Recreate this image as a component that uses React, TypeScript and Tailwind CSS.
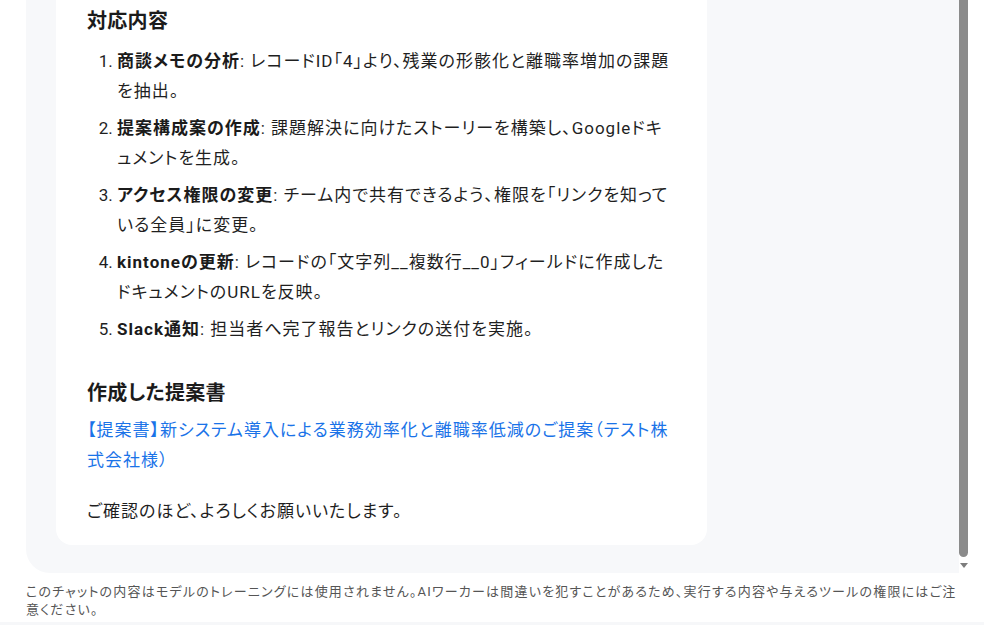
import React from "react";

type Step = { title: string; body: string };

const steps: Step[] = [
  {
    title: "商談メモの分析",
    body: "レコードID「4」より、残業の形骸化と離職率増加の課題を抽出。",
  },
  {
    title: "提案構成案の作成",
    body: "課題解決に向けたストーリーを構築し、Googleドキュメントを生成。",
  },
  {
    title: "アクセス権限の変更",
    body: "チーム内で共有できるよう、権限を「リンクを知っている全員」に変更。",
  },
  {
    title: "kintoneの更新",
    body: "レコードの「文字列__複数行__0」フィールドに作成したドキュメントのURLを反映。",
  },
  {
    title: "Slack通知",
    body: "担当者へ完了報告とリンクの送付を実施。",
  },
];

function Scrollbar() {
  return (
    <div className="w-[9px] flex flex-col items-center bg-white">
      <div className="w-[9px] flex-1 bg-[#8b8b8b] rounded-b-full" />
      <div className="h-[16px] flex items-center justify-center">
        <div className="w-0 h-0 border-l-[4px] border-r-[4px] border-t-[5px] border-l-transparent border-r-transparent border-t-[#7d7d7d]" />
      </div>
    </div>
  );
}

export default function App() {
  return (
    <div className="w-[984px] h-[625px] bg-white flex flex-col overflow-hidden text-[#1f1f1f] font-[Roboto,'Noto_Sans_CJK_JP','Noto_Sans',sans-serif] [font-feature-settings:'palt']">
      <div className="h-[573px] flex pl-[26px] pr-[16px]">
        <div className="flex-1 bg-[#f7f8fa] rounded-bl-[24px] pl-[30px] pb-[28px] flex flex-col justify-end">
          <div className="w-[651px] bg-white rounded-b-[16px] px-[31px] pt-[7px] pb-[19px] tracking-[1px]">
            <h2 className="text-[20px] leading-[28px] font-bold tracking-[0.3px] text-[#1b1b1b]">
              対応内容
            </h2>
            <ol className="mt-[11px] list-decimal pl-[30px] text-[17px] leading-[30px] flex flex-col gap-[7px]">
              {steps.map((s) => (
                <li key={s.title} className="marker:tracking-normal">
                  <span className="font-bold text-[#1b1b1b]">{s.title}</span>
                  <span>: {s.body}</span>
                </li>
              ))}
            </ol>
            <h2 className="mt-[35px] text-[20px] leading-[28px] font-bold tracking-[0.3px] text-[#1b1b1b]">
              作成した提案書
            </h2>
            <p className="mt-[8px] text-[17px] leading-[30px]">
              <a href="#" className="text-[#1a73e8]">
                【提案書】新システム導入による業務効率化と離職率低減のご提案（テスト株式会社様）
              </a>
            </p>
            <p className="mt-[21px] text-[17px] leading-[30px]">
              ご確認のほど、よろしくお願いいたします。
            </p>
          </div>
        </div>
        <Scrollbar />
      </div>
      <p className="mt-[10px] pl-[26px] pr-[16px] text-[13px] leading-[18px] tracking-[1.2px] text-[#555]">
        このチャットの内容はモデルのトレーニングには使用されません。AIワーカーは間違いを犯すことがあるため、実行する内容や与えるツールの権限にはご注意ください。
      </p>
      <div className="mt-[3px] flex-1 bg-[#f6f7f9]" />
    </div>
  );
}
